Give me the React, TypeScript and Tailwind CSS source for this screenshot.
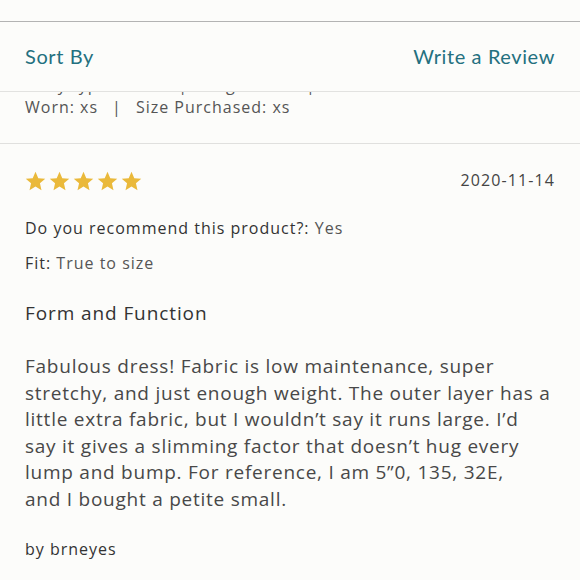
import React from "react";

const Star = () => (
  <svg width="21" height="20" viewBox="0 0 24 23" className="block">
    <path
      d="M12 0.8l3.2 7.4 8 0.7-6.1 5.3 1.8 7.9L12 17.9l-6.9 4.2 1.8-7.9L0.8 8.9l8-0.7z"
      fill="#eab93a"
    />
  </svg>
);

export default function App() {
  const font = { fontFamily: "'Open Sans', 'Noto Sans', sans-serif" };
  const lato = { fontFamily: "Lato, 'Noto Sans', sans-serif" };
  return (
    <div
      className="w-[580px] h-[580px] overflow-hidden bg-[#fcfcfa] text-[#3b3b3b]"
      style={font}
    >
      <div className="h-[21px]" />
      <div className="h-[1px] bg-[#b3b3b3]" />
      <div
        className="h-[69px] flex items-center justify-between px-[25px] text-[20px] tracking-[0.6px] text-[#24707f]"
        style={lato}
      >
        <span className="mt-[-2px]">Sort By</span>
        <span className="mt-[-2px]">Write a Review</span>
      </div>
      <div className="h-[1px] bg-[#e2e2e0]" />
      <div className="h-[4px] overflow-hidden px-[25px]">
        <div className="mt-[-17px] text-[16px] leading-[20px] tracking-[1px] text-[#555] whitespace-nowrap">
          Body type: Petite &nbsp;|&nbsp; Height: 5'0" &nbsp;|&nbsp; Usual size: xs
        </div>
      </div>
      <div className="px-[25px] pt-[1px] text-[16px] leading-[20px] tracking-[1px] text-[#555] flex gap-[14px]">
        <span>Worn: xs</span>
        <span>|</span>
        <span>Size Purchased: xs</span>
      </div>
      <div className="h-[26px]" />
      <div className="h-[1px] bg-[#e0e0de]" />
      <div className="px-[25px] pt-[25px]">
        <div className="flex items-center justify-between h-[24px]">
          <div className="flex gap-[3px]">
            <Star />
            <Star />
            <Star />
            <Star />
            <Star />
          </div>
          <span className="text-[16px] tracking-[1.1px] text-[#444] mt-[-2px]">
            2020-11-14
          </span>
        </div>
        <div className="mt-[24px] text-[16px] leading-[22px] tracking-[1px] text-[#333]">
          Do you recommend this product?: <span className="text-[#555]">Yes</span>
        </div>
        <div className="mt-[13px] text-[16px] leading-[22px] tracking-[1px] text-[#333]">
          Fit: <span className="text-[#555]">True to size</span>
        </div>
        <div className="mt-[27px] text-[19px] leading-[24px] tracking-[0.9px] text-[#333]">
          Form and Function
        </div>
        <p className="mt-[28px] text-[19px] leading-[26.5px] tracking-[0.75px] text-[#484848] whitespace-nowrap">
          Fabulous dress! Fabric is low maintenance, super
          <br />
          stretchy, and just enough weight. The outer layer has a
          <br />
          little extra fabric, but I wouldn’t say it runs large. I’d
          <br />
          say it gives a slimming factor that doesn’t hug every
          <br />
          lump and bump. For reference, I am 5”0, 135, 32E,
          <br />
          and I bought a petite small.
        </p>
        <div className="mt-[26px] text-[16px] leading-[22px] tracking-[1px] text-[#333]">
          by brneyes
        </div>
      </div>
    </div>
  );
}
